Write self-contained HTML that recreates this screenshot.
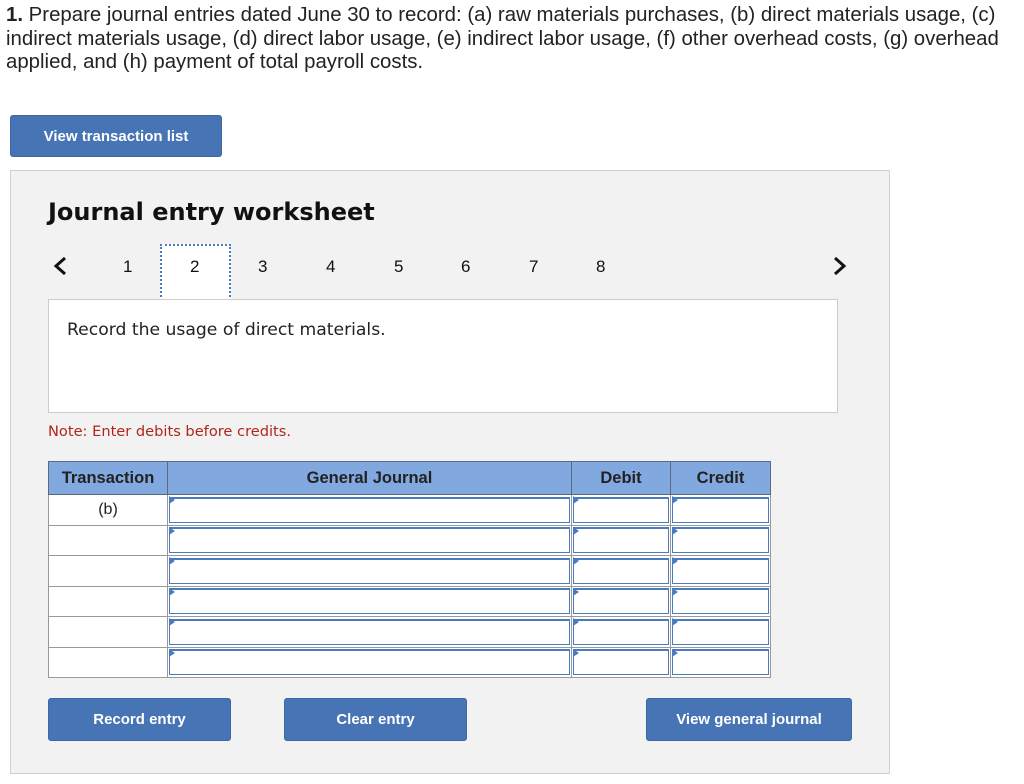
<!DOCTYPE html>
<html><head><meta charset="utf-8"><style>
body{margin:0;width:1024px;height:784px;background:#fff;position:relative;font-family:"Liberation Sans",sans-serif;color:#222;overflow:hidden}
.q{position:absolute;left:6px;top:4px;font-size:20.4px;line-height:23.5px;white-space:nowrap}
.btn{position:absolute;background:#4674b5;color:#fff;font-weight:bold;font-size:15px;border-radius:3px;display:flex;align-items:center;justify-content:center;border:1px solid #3d66a3;box-sizing:border-box}
.panel{position:absolute;left:10px;top:170px;width:880px;height:604px;background:#f2f2f2;border:1px solid #cfcfcf;box-sizing:border-box}
.dv{font-family:"DejaVu Sans",sans-serif}
.abs{position:absolute}
.num{position:absolute;top:257px;font-size:17px;color:#111}
table{position:absolute;left:48px;top:461px;border-collapse:collapse;background:#fff}
th{background:#82a9df;height:33px;font-size:16.5px;color:#222;border:1px solid #5a6a80;padding:0;box-sizing:border-box}
td{height:30.5px;border:1px solid #999;padding:1px;position:relative;box-sizing:border-box}
td.i div{border:1px solid #4a7bbf;border-top:2px solid #4a7bbf;height:26px;background:#fff;box-sizing:border-box}
td.i:before{content:"";position:absolute;left:1px;top:1px;border-left:6px solid #4a7bbf;border-top:4px solid transparent;border-bottom:4px solid transparent}
</style></head><body>
<div class="q"><b>1.</b> Prepare journal entries dated June 30 to record: (a) raw materials purchases, (b) direct materials usage, (c)<br>indirect materials usage, (d) direct labor usage, (e) indirect labor usage, (f) other overhead costs, (g) overhead<br>applied, and (h) payment of total payroll costs.</div>
<div class="btn" style="left:10px;top:115px;width:212px;height:42px">View transaction list</div>
<div class="panel"></div>
<div class="abs dv" style="left:48px;top:198px;font-size:24px;font-weight:bold;color:#111">Journal entry worksheet</div>
<svg class="abs" style="left:52px;top:256px" width="16" height="20"><path d="M13 2 L4 10 L13 18" stroke="#111" stroke-width="3" fill="none"/></svg>
<svg class="abs" style="left:832px;top:256px" width="16" height="20"><path d="M3 2 L12 10 L3 18" stroke="#111" stroke-width="3" fill="none"/></svg>
<div class="abs" style="left:160px;top:244px;width:71px;height:57px;background:#fff;border:2px dotted #4a7bbf;box-sizing:border-box"></div>
<div class="num" style="left:123px">1</div><div class="num" style="left:190px">2</div><div class="num" style="left:258px">3</div><div class="num" style="left:326px">4</div><div class="num" style="left:394px">5</div><div class="num" style="left:461px">6</div><div class="num" style="left:529px">7</div><div class="num" style="left:596px">8</div>
<div class="abs" style="left:48px;top:299px;width:790px;height:114px;background:#fff;border:1px solid #ccc;box-sizing:border-box"></div>
<div class="abs dv" style="left:67px;top:320px;font-size:17.2px;color:#222">Record the usage of direct materials.</div>
<div class="abs dv" style="left:48px;top:423px;font-size:14.6px;color:#b0261d">Note: Enter debits before credits.</div>
<table>
<tr><th style="width:119px">Transaction</th><th style="width:404px">General Journal</th><th style="width:99px">Debit</th><th style="width:100px">Credit</th></tr>
<tr><td style="text-align:center;font-size:16px">(b)</td><td class="i"><div></div></td><td class="i"><div></div></td><td class="i"><div></div></td></tr>
<tr><td></td><td class="i"><div></div></td><td class="i"><div></div></td><td class="i"><div></div></td></tr>
<tr><td></td><td class="i"><div></div></td><td class="i"><div></div></td><td class="i"><div></div></td></tr>
<tr><td></td><td class="i"><div></div></td><td class="i"><div></div></td><td class="i"><div></div></td></tr>
<tr><td></td><td class="i"><div></div></td><td class="i"><div></div></td><td class="i"><div></div></td></tr>
<tr><td></td><td class="i"><div></div></td><td class="i"><div></div></td><td class="i"><div></div></td></tr>
</table>
<div class="btn" style="left:48px;top:698px;width:183px;height:43px">Record entry</div>
<div class="btn" style="left:284px;top:698px;width:183px;height:43px">Clear entry</div>
<div class="btn" style="left:646px;top:698px;width:206px;height:43px">View general journal</div>
</body></html>
